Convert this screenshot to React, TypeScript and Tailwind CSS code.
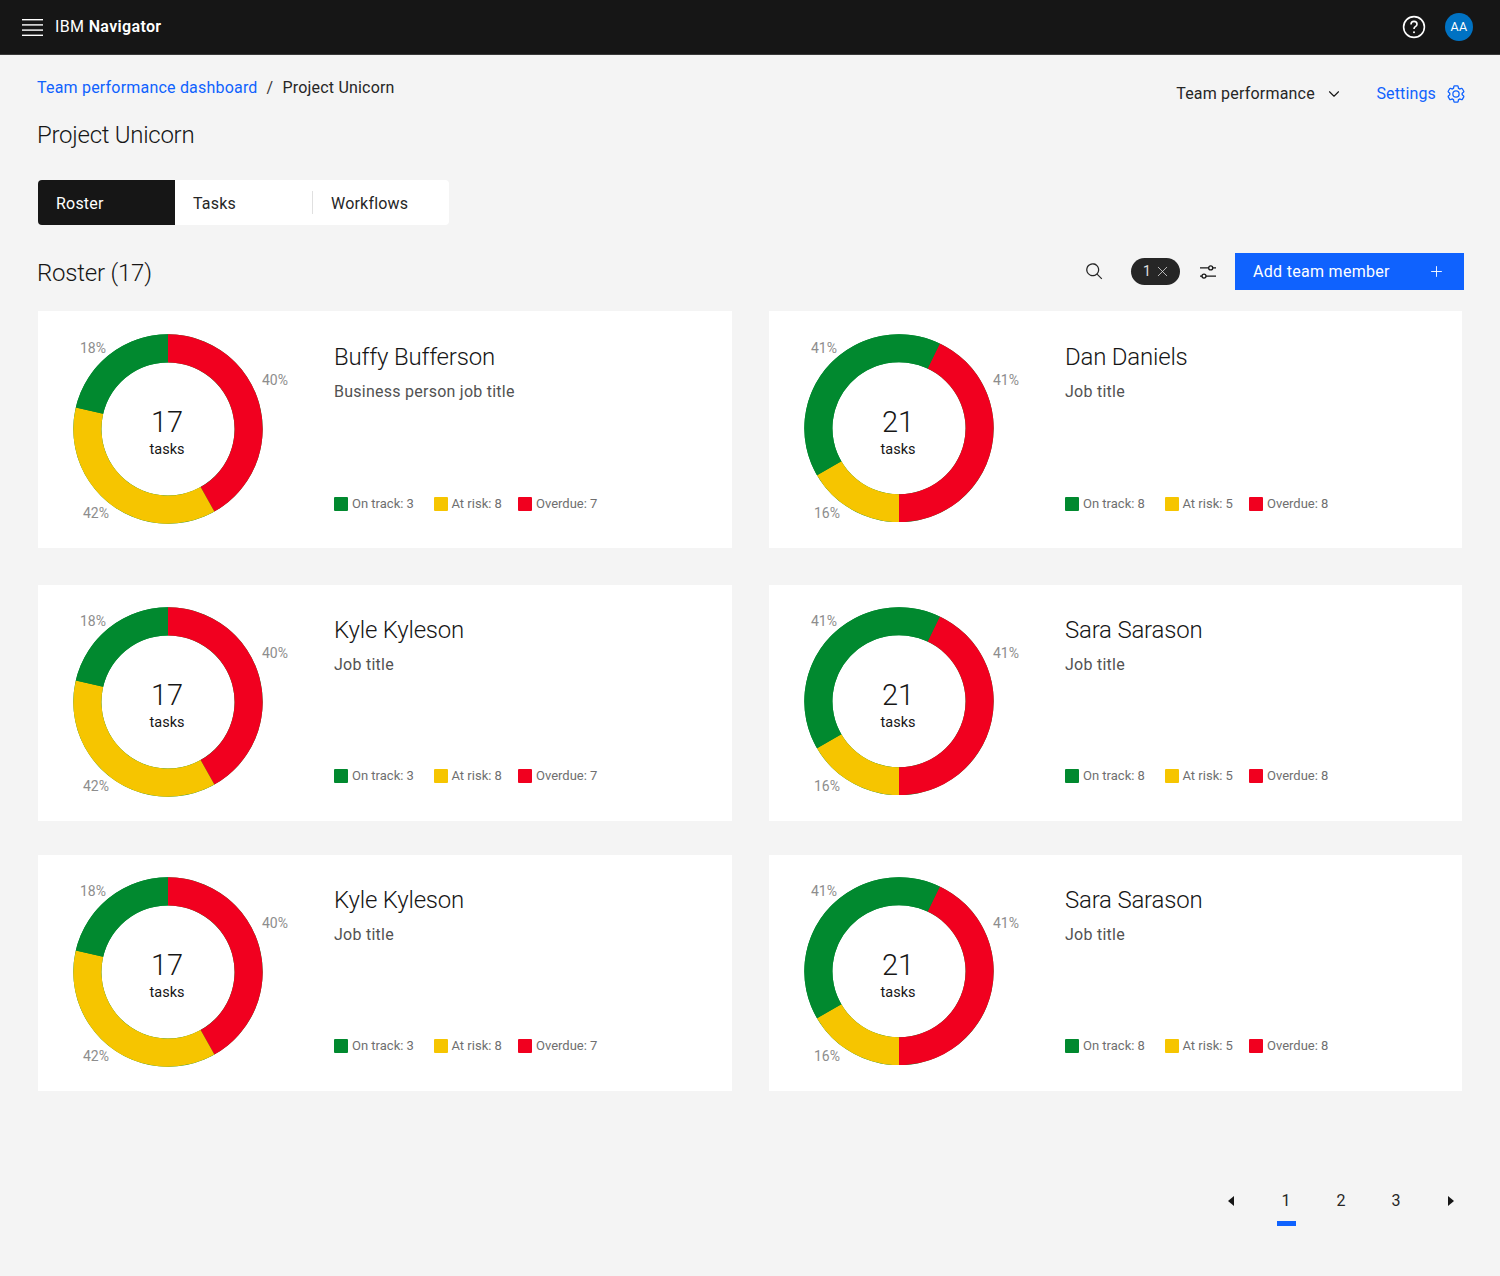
import { ChevronDown, Plus, X } from "lucide-react";

const FONT = "font-['Roboto',sans-serif]";

const GREEN = "#01892f";
const YELLOW = "#f6c500";
const RED = "#f1001f";

type Slice = { from: number; to: number; color: string };

type Person = {
  name: string;
  title: string;
  total: number;
  chartHeight: number;
  slices: Slice[];
  percents: [string, string, string];
  counts: [number, number, number];
};

const buffy = {
  total: 17,
  chartHeight: 190,
  slices: [
    { from: 0, to: 150.7, color: RED },
    { from: 150.7, to: 283.2, color: YELLOW },
    { from: 283.2, to: 360, color: GREEN },
  ],
  percents: ["18%", "40%", "42%"] as [string, string, string],
  counts: [3, 8, 7] as [number, number, number],
};

const dan = {
  total: 21,
  chartHeight: 188.5,
  slices: [
    { from: 25.5, to: 180, color: RED },
    { from: 180, to: 240, color: YELLOW },
    { from: 240, to: 385.5, color: GREEN },
  ],
  percents: ["41%", "41%", "16%"] as [string, string, string],
  counts: [8, 5, 8] as [number, number, number],
};

function arc(from: number, to: number) {
  const cx = 95;
  const cy = 95;
  const outer = 94.7;
  const inner = 66.6;
  const point = (r: number, deg: number) => {
    const a = ((deg - 90) * Math.PI) / 180;
    return `${(cx + r * Math.cos(a)).toFixed(2)} ${(cy + r * Math.sin(a)).toFixed(2)}`;
  };
  const large = to - from > 180 ? 1 : 0;
  return `M${point(outer, from)} A${outer} ${outer} 0 ${large} 1 ${point(outer, to)} L${point(inner, to)} A${inner} ${inner} 0 ${large} 0 ${point(inner, from)} Z`;
}

function Donut({ person }: { person: Person }) {
  return (
    <div className="relative w-[296px] shrink-0">
      <svg
        width="190"
        height={person.chartHeight}
        viewBox="0 0 190 190"
        preserveAspectRatio="none"
        className="ml-[35px] mt-[22.5px]"
      >
        {/* green base ring, it shows a little at the edges of the other slices */}
        <path d={arc(0, 180)} fill={GREEN} />
        <path d={arc(180, 360)} fill={GREEN} />
        {person.slices.map((s) => (
          <path key={s.from} d={arc(s.from, s.to)} fill={s.color} />
        ))}
      </svg>

      {/* chart labels */}
      <span className="absolute left-[42px] top-[29px] text-[14px] leading-[16px] text-[#8d8d8d]">{person.percents[0]}</span>
      <span className="absolute left-[224px] top-[61px] text-[14px] leading-[16px] text-[#8d8d8d]">{person.percents[1]}</span>
      <span className="absolute left-[45px] top-[194px] text-[14px] leading-[16px] text-[#8d8d8d]">{person.percents[2]}</span>

      <div className="absolute left-[79px] top-[94px] flex w-[100px] flex-col items-center text-[#161616]">
        <span className="text-[29px] leading-[34px] font-light">{person.total}</span>
        <span className="mt-[2px] text-[14.5px] leading-[18px]">tasks</span>
      </div>
    </div>
  );
}

function Legend({ color, label, width }: { color: string; label: string; width: string }) {
  return (
    <div className={`flex items-center gap-[4px] whitespace-nowrap ${width}`}>
      <span className="h-[14px] w-[14px] rounded-[1px]" style={{ backgroundColor: color }} />
      <span className="text-[13px] leading-[16px] text-[#6f6f6f]">{label}</span>
    </div>
  );
}

function PersonCard({ person, className, inner }: { person: Person; className: string; inner: string }) {
  return (
    <div className={`flex bg-white ${className}`}>
      <div className={`flex flex-1 ${inner}`}>
        <Donut person={person} />
        <div className="flex flex-1 flex-col pt-[30px] pb-[36px]">
          <h3 className="text-[24px] leading-[32px] font-light tracking-[-0.2px] text-[#161616]">{person.name}</h3>
          <p className="mt-[7px] text-[16px] leading-[24px] tracking-[0.25px] text-[#525252]">{person.title}</p>
          <div className="mt-auto flex">
            <Legend color={GREEN} width="w-[99.5px]" label={`On track: ${person.counts[0]}`} />
            <Legend color={YELLOW} width="w-[84.5px]" label={`At risk: ${person.counts[1]}`} />
            <Legend color={RED} width="w-[90px]" label={`Overdue: ${person.counts[2]}`} />
          </div>
        </div>
      </div>
    </div>
  );
}

const rows: { left: Person; right: Person; h: string; inner: string }[] = [
  {
    left: { name: "Buffy Bufferson", title: "Business person job title", ...buffy },
    right: { name: "Dan Daniels", title: "Job title", ...dan },
    h: "h-[237px]",
    inner: "",
  },
  {
    left: { name: "Kyle Kyleson", title: "Job title", ...buffy },
    right: { name: "Sara Sarason", title: "Job title", ...dan },
    h: "h-[236px]",
    inner: "-translate-y-px",
  },
  {
    left: { name: "Kyle Kyleson", title: "Job title", ...buffy },
    right: { name: "Sara Sarason", title: "Job title", ...dan },
    h: "h-[236px]",
    inner: "-translate-y-px",
  },
];

export default function App() {
  return (
    <div className={`min-h-[1276px] bg-[#f4f4f4] text-[#161616] ${FONT}`}>
      {/* Header */}
      <header className="flex h-[55px] items-center border-b border-[#393939] bg-[#161616] pl-[22px] pr-[27px] text-white">
        <svg width="21" height="17" viewBox="0 0 21 17" fill="#fff">
          <rect y="0" width="21" height="1.4" />
          <rect y="5.2" width="21" height="1.4" />
          <rect y="10.4" width="21" height="1.4" />
          <rect y="15.6" width="21" height="1.4" />
        </svg>
        <span className="ml-[12px] text-[16px] leading-[24px] tracking-[0.35px]">
          IBM <span className="font-semibold">Navigator</span>
        </span>
        <div className="ml-auto flex items-center gap-[19px]">
          <svg width="24" height="24" viewBox="0 0 24 24" fill="none" stroke="#fff">
            <circle cx="12" cy="12" r="10.4" strokeWidth="1.6" />
            <path d="M9 9.4c0-1.8 1.3-3 3-3s3 1.2 3 2.8c0 1.3-.8 1.9-1.7 2.5-.9.6-1.3 1.1-1.3 2.3" strokeWidth="1.6" />
            <circle cx="12" cy="17.2" r="1" fill="#fff" stroke="none" />
          </svg>
          <div className="flex h-[28px] w-[28px] items-center justify-center rounded-full bg-[#0072c3] text-[12.5px] tracking-[0.3px]">AA</div>
        </div>
      </header>

      <main className="pl-[37px] pr-[36px]">
        {/* Breadcrumb + page actions */}
        <div className="flex items-start justify-between">
          <div>
            <nav className="mt-[21px] flex h-[24px] items-center text-[16px] tracking-[0.2px]">
              <span className="text-[#0f62fe]">Team performance dashboard</span>
              <span className="mx-[9px] text-[#393939]">/</span>
              <span className="text-[#262626]">Project Unicorn</span>
            </nav>
            <h1 className="mt-[19px] text-[24px] leading-[32px] font-light tracking-[-0.27px]">Project Unicorn</h1>
          </div>
          <div className="mt-[27px] flex items-center text-[16px] leading-[24px] tracking-[0.2px]">
            <span className="text-[#262626]">Team performance</span>
            <ChevronDown size={18} strokeWidth={1.5} className="ml-[10px]" />
            <span className="ml-[33.5px] tracking-[0.15px] text-[#0f62fe]">Settings</span>
            <svg width="20" height="20" viewBox="0 0 32 32" fill="#0f62fe" className="ml-[10px] mr-[-2px]">
              <path d="M27,16.76c0-.25,0-.5,0-.76s0-.51,0-.77l1.92-1.68A2,2,0,0,0,29.3,11L26.94,7a2,2,0,0,0-1.73-1,2,2,0,0,0-.64.1l-2.43.82a11.35,11.35,0,0,0-1.31-.75l-.51-2.52a2,2,0,0,0-2-1.61H13.64a2,2,0,0,0-2,1.61l-.51,2.52a11.48,11.48,0,0,0-1.32.75L7.43,6.06A2,2,0,0,0,6.79,6,2,2,0,0,0,5.06,7L2.7,11a2,2,0,0,0,.41,2.51L5,15.24c0,.25,0,.5,0,.76s0,.51,0,.77L3.11,18.45A2,2,0,0,0,2.7,21L5.06,25a2,2,0,0,0,1.73,1,2,2,0,0,0,.64-.1l2.43-.82a11.35,11.35,0,0,0,1.31.75l.51,2.52a2,2,0,0,0,2,1.61h4.72a2,2,0,0,0,2-1.61l.51-2.52a11.48,11.48,0,0,0,1.32-.75l2.42.82a2,2,0,0,0,.64.1,2,2,0,0,0,1.73-1L29.3,21a2,2,0,0,0-.41-2.51ZM25.21,24l-3.43-1.16a8.86,8.86,0,0,1-2.71,1.57L18.36,28H13.64l-.71-3.55a9.36,9.36,0,0,1-2.7-1.57L6.79,24,4.43,20l2.72-2.4a8.9,8.9,0,0,1,0-3.13L4.43,12,6.79,8l3.43,1.16a8.86,8.86,0,0,1,2.71-1.57L13.64,4h4.72l.71,3.55a9.36,9.36,0,0,1,2.7,1.57L25.21,8l2.36,4-2.72,2.4a8.9,8.9,0,0,0,0,3.13L27.57,20Z" />
              <path d="M16,22a6,6,0,1,1,6-6A5.94,5.94,0,0,1,16,22Zm0-10a3.91,3.91,0,0,0-4,4,3.91,3.91,0,0,0,4,4,3.91,3.91,0,0,0,4-4A3.91,3.91,0,0,0,16,12Z" />
            </svg>
          </div>
        </div>

        {/* Tabs */}
        <div className="mt-[29px] ml-px flex h-[45px] w-[411px] overflow-hidden rounded-[4px] bg-white text-[16px] tracking-[0.2px]">
          <div className="flex w-[137px] items-center bg-[#161616] pl-[18px] pt-[2px] text-white">Roster</div>
          <div className="flex w-[137px] items-center pl-[18px] pt-[2px] text-[#262626]">Tasks</div>
          <div className="flex flex-1 items-center text-[#262626]">
            <div className="flex h-[23px] items-center border-l border-[#e0e0e0] pl-[18px] pt-[2px]">Workflows</div>
          </div>
        </div>

        {/* Roster toolbar */}
        <div className="mt-[28px] flex h-[37px] items-center">
          <h2 className="pt-[2px] text-[24px] leading-[32px] font-light tracking-[-0.2px]">Roster (17)</h2>
          <div className="ml-auto flex items-center">
            <svg width="19" height="19" viewBox="0 0 32 32" fill="#262626" className="mr-[27px]">
              <path d="M29,27.5859l-7.5521-7.5521a11.0177,11.0177,0,1,0-1.4141,1.4141L27.5859,29ZM4,13a9,9,0,1,1,9,9A9.01,9.01,0,0,1,4,13Z" />
            </svg>
            <div className="flex h-[27px] w-[49px] items-center justify-center gap-[3px] rounded-full bg-[#262626] pl-[3px] text-[14px] text-[#e0e0e0]">
              1 <X size={17} strokeWidth={1.1} />
            </div>
            <svg width="18" height="16" viewBox="0 0 18 16" fill="none" stroke="#161616" strokeWidth="1.3" className="ml-[19px]">
              <path d="M1 3.9h8.7M13.7 3.9H17M1 12.1h2M7 12.1h10" />
              <circle cx="11.7" cy="3.9" r="2" />
              <circle cx="5" cy="12.1" r="2" />
            </svg>
            <button className="ml-[18px] flex h-[37px] w-[229px] items-center justify-between bg-[#0f62fe] pl-[18px] pr-[19.5px] text-[16px] tracking-[0.3px] text-white">
              Add team member
              <Plus size={17} strokeWidth={1.3} />
            </button>
          </div>
        </div>

        {/* Cards */}
        <div className="mt-[21px] ml-px flex flex-col">
          {rows.map((row, i) => (
            <div key={i} className={`flex gap-[37px] ${i === 0 ? "mb-[37px]" : i === 1 ? "mb-[34px]" : ""}`}>
              <PersonCard person={row.left} inner={row.inner} className={`w-[694px] ${row.h}`} />
              <PersonCard person={row.right} inner={row.inner} className={`w-[693px] ${row.h}`} />
            </div>
          ))}
        </div>

        {/* Pagination */}
        <div className="mt-[98px] flex justify-end pr-px text-[16px] text-[#262626]">
          <div className="flex items-start gap-[31px]">
            <div className="flex h-[24px] w-[24px] items-center justify-center">
              <svg width="6" height="10" viewBox="0 0 6 10" fill="#161616"><path d="M6 0v10L0 5z" /></svg>
            </div>
            <div className="flex w-[24px] flex-col items-center">
              <span className="leading-[24px]">1</span>
              <span className="mt-[8px] h-[5px] w-[19px] shrink-0 bg-[#0f62fe]" />
            </div>
            <div className="w-[24px] text-center leading-[24px]">2</div>
            <div className="w-[24px] text-center leading-[24px]">3</div>
            <div className="flex h-[24px] w-[24px] items-center justify-center">
              <svg width="6" height="10" viewBox="0 0 6 10" fill="#161616"><path d="M0 0v10l6-5z" /></svg>
            </div>
          </div>
        </div>
      </main>
    </div>
  );
}
